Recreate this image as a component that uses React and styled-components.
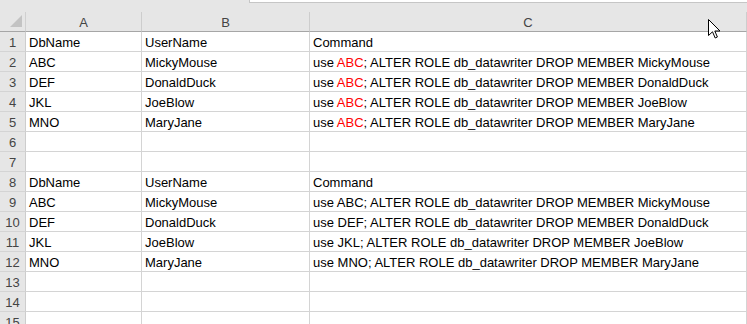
import React from "react";
import styled, { createGlobalStyle } from "styled-components";

const Global = createGlobalStyle`
  html, body {
    margin: 0;
    padding: 0;
    background: #ffffff;
    overflow: hidden;
  }
  body {
    font-family: "Liberation Sans", Arial, sans-serif;
  }
`;

const Sheet = styled.div`
  position: relative;
  width: 747px;
  height: 324px;
  overflow: hidden;
  background: #e6e6e6;
`;

const TopStrip = styled.div`
  height: 12px;
  display: flex;
`;

const FormulaEdge = styled.div`
  margin-left: 249px;
  flex: 1;
  height: 3px;
  box-sizing: border-box;
  background: #ffffff;
  border-left: 1px solid #c6c6c6;
  border-bottom: 1px solid #c6c6c6;
`;

const Grid = styled.div`
  display: grid;
  grid-template-columns: 26px 116px 168px 1fr;
  grid-auto-rows: 20px;
`;

const Corner = styled.div`
  box-sizing: border-box;
  border-right: 1px solid #d0d0d0;
  border-bottom: 1px solid #a6a6a6;
  display: flex;
  align-items: flex-end;
  justify-content: flex-end;
  padding: 0 3px 4px 0;
`;

const ColHead = styled.div`
  box-sizing: border-box;
  border-right: 1px solid #cdcdcd;
  border-bottom: 1px solid #a6a6a6;
  display: flex;
  align-items: center;
  justify-content: center;
  font-size: 13px;
  color: #444444;
  padding-top: 1px;
`;

const RowHead = styled.div`
  box-sizing: border-box;
  border-right: 1px solid #cdcdcd;
  border-bottom: 1px solid #d4d4d4;
  background: #e6e6e6;
  display: flex;
  align-items: center;
  justify-content: center;
  font-size: 13px;
  color: #444444;
  padding-top: 1px;
`;

const Cell = styled.div`
  box-sizing: border-box;
  background: #ffffff;
  border-right: 1px solid #d4d4d4;
  border-bottom: 1px solid #d4d4d4;
  display: flex;
  align-items: center;
  padding: 1px 3px 0;
  font-size: 13px;
  color: #000000;
  white-space: nowrap;
  overflow: visible;
`;

const Red = styled.span`
  color: #ff0000;
`;

const Cursor = styled.svg`
  position: absolute;
  left: 708px;
  top: 19px;
`;

const first = [
  ["ABC", "MickyMouse"],
  ["DEF", "DonaldDuck"],
  ["JKL", "JoeBlow"],
  ["MNO", "MaryJane"],
];

function Row({ n, a, b, c }) {
  return (
    <>
      <RowHead>{n}</RowHead>
      <Cell>{a}</Cell>
      <Cell>{b}</Cell>
      <Cell>{c}</Cell>
    </>
  );
}

export default function App() {
  return (
    <Sheet>
      <Global />
      <TopStrip>
        <FormulaEdge />
      </TopStrip>
      <Grid>
        <Corner>
          <svg width="12" height="12" viewBox="0 0 12 12">
            <polygon points="12,0 12,12 0,12" fill="#c3c3c3" />
          </svg>
        </Corner>
        <ColHead>A</ColHead>
        <ColHead>B</ColHead>
        <ColHead>C</ColHead>

        <Row n="1" a="DbName" b="UserName" c="Command" />
        {first.map(([db, user], i) => (
          <Row
            key={db}
            n={i + 2}
            a={db}
            b={user}
            c={
              <span>
                use <Red>ABC</Red>; ALTER ROLE db_datawriter DROP MEMBER {user}
              </span>
            }
          />
        ))}
        <Row n="6" />
        <Row n="7" />
        <Row n="8" a="DbName" b="UserName" c="Command" />
        {first.map(([db, user], i) => (
          <Row
            key={"b" + db}
            n={i + 9}
            a={db}
            b={user}
            c={`use ${db}; ALTER ROLE db_datawriter DROP MEMBER ${user}`}
          />
        ))}
        <Row n="13" />
        <Row n="14" />
        <Row n="15" />
      </Grid>
      <Cursor width="13" height="20" viewBox="0 0 13 20">
        <path
          d="M0.5 0.5 L0.5 16.5 L4.5 12.8 L7.2 19 L9.4 18 L6.8 12 L12 12 Z"
          fill="#ffffff"
          stroke="#000000"
          strokeWidth="1"
          strokeLinejoin="miter"
        />
      </Cursor>
    </Sheet>
  );
}
